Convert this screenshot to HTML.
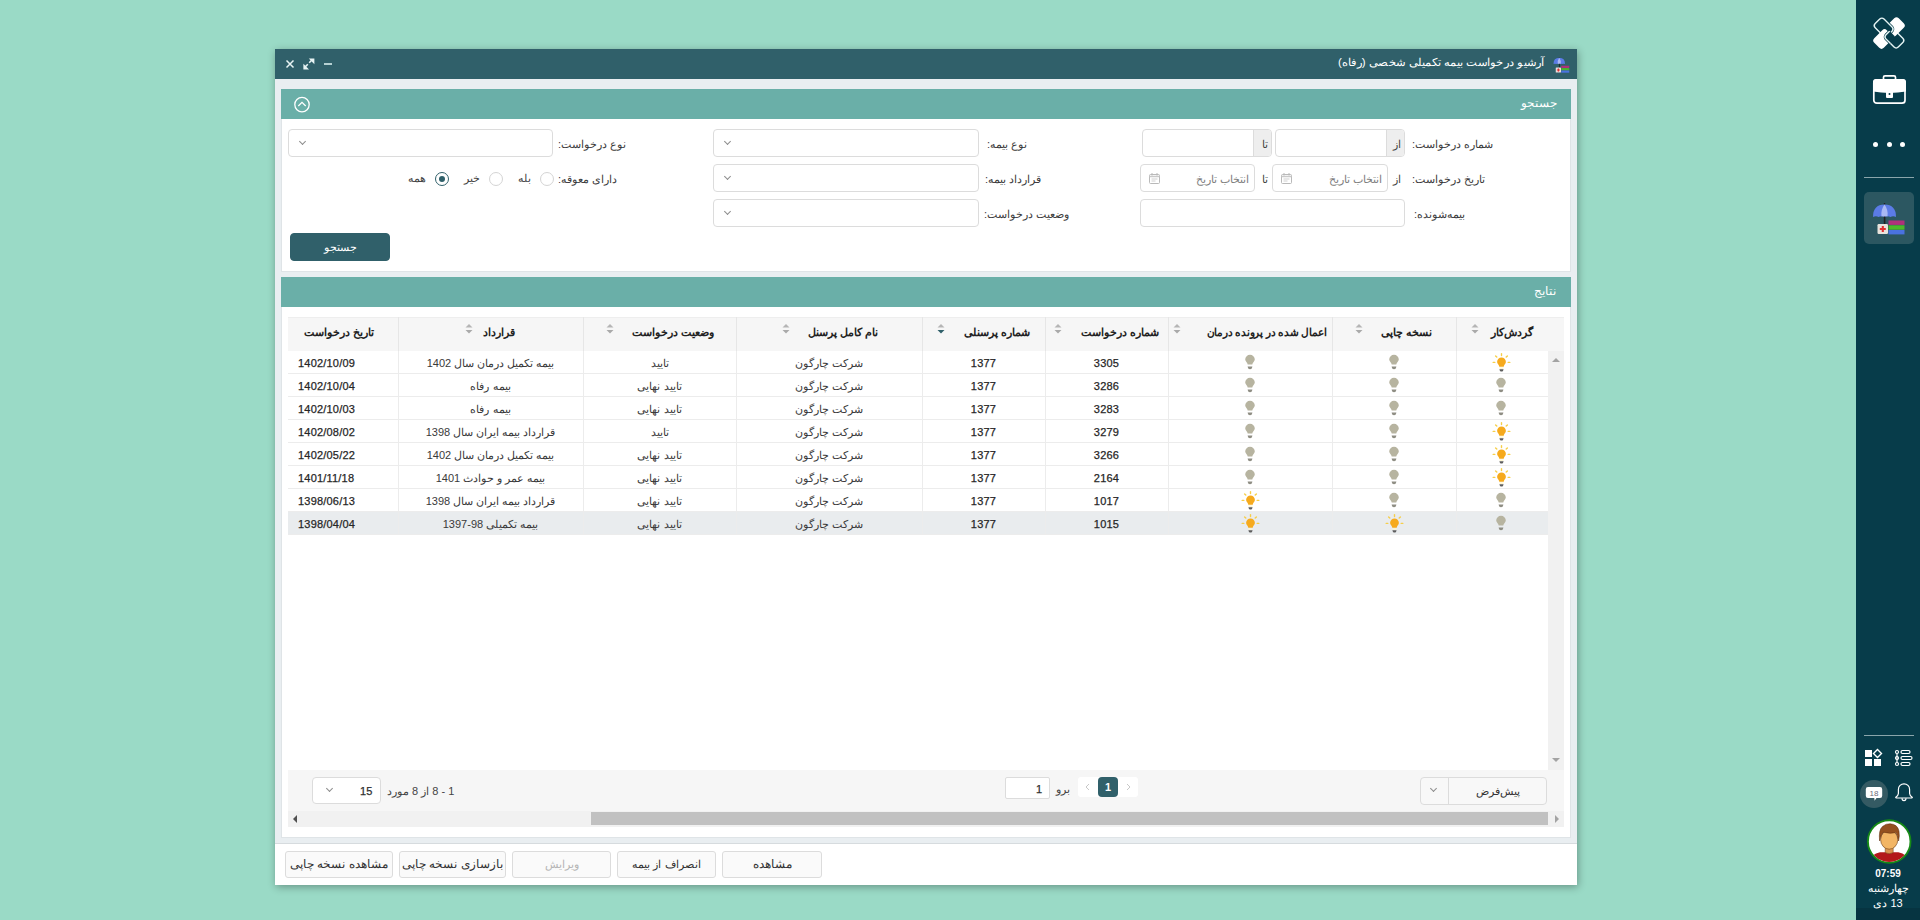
<!DOCTYPE html><html lang="fa"><head><meta charset="utf-8"><style>
*{box-sizing:border-box;margin:0;padding:0}
html,body{width:1920px;height:920px;overflow:hidden}
body{position:relative;background:#9adac6;font-family:"Liberation Sans",sans-serif;font-size:11px;color:#333}
.a{position:absolute}
.t{position:absolute;white-space:nowrap;direction:rtl;line-height:16px}
.inp{position:absolute;background:#fff;border:1px solid #dcdcdc;border-radius:4px}
.chev{position:absolute;width:5px;height:5px;border-right:1px solid #8c8c8c;border-bottom:1px solid #8c8c8c;transform:rotate(45deg)}
.btn{position:absolute;background:#fafafa;border:1px solid #dcdcdc;border-radius:3px;color:#333;text-align:center;line-height:25px;direction:rtl;white-space:nowrap}
.c{position:absolute;white-space:nowrap;direction:rtl;line-height:16px;color:#3a3a3a;font-size:11px}
.n{position:absolute;white-space:nowrap;line-height:16px;color:#262626;font-size:11px;-webkit-text-stroke:0.25px #262626;letter-spacing:0.2px}
.hd{position:absolute;white-space:nowrap;direction:rtl;font-weight:bold;color:#222;font-size:11px;line-height:16px}
</style></head><body>
<div class="a" style="left:1856px;top:0;width:64px;height:920px;background:#073c4a"></div>
<div class="a" style="left:275px;top:49px;width:1302px;height:836px;background:#e9eef1;box-shadow:1px 2px 8px rgba(0,0,0,.32)"></div>
<div class="a" style="left:275px;top:49px;width:1302px;height:30px;background:#30606a"></div>
<div class="t" style="right:375px;top:54px;color:#fff;transform:scaleX(1.045);transform-origin:100% 50%">آرشیو درخواست بیمه تکمیلی شخصی (رفاه)</div>
<svg class="a" style="left:1553px;top:56px" width="18" height="18" viewBox="0 0 36 36">
<path d="M12.5 2 V4" stroke="#222" stroke-width="1.4"/>
<path d="M1 16 Q1 3.5 12.5 3.5 Q24 3.5 24 16 Q21 14.5 18.5 16 Q15.5 14.5 12.5 16 Q9.5 14.5 6.5 16 Q4 14.5 1 16Z" fill="#5b7be6"/>
<path d="M12.5 3.5 Q8.5 9 9.5 15.6 Q11 14.8 12.5 16 Q14 14.8 15.5 15.6 Q16.5 9 12.5 3.5Z" fill="#a9b9f3"/>
<rect x="11.8" y="15.5" width="2" height="8" fill="#1b2b2b"/>
<rect x="5.5" y="23" width="10.5" height="10" rx="1.2" fill="#ecdcdc"/><path d="M10.8 25V31M7.8 28H13.8" stroke="#e03030" stroke-width="2.4"/>
<rect x="16.5" y="19.5" width="16" height="4.4" fill="#b0307a"/><rect x="16.5" y="24.3" width="16" height="4.4" fill="#4cb82a"/><rect x="16.5" y="29" width="16" height="4.4" fill="#4a72e0"/>
</svg>
<svg class="a" style="left:284px;top:57px" width="52" height="14" viewBox="0 0 52 14">
<path d="M2.5 3.5 L9.5 10.5 M9.5 3.5 L2.5 10.5" stroke="#e8f4f4" stroke-width="1.5"/>
<path d="M25.2 5.8 L28.2 2.8" stroke="#e8f4f4" stroke-width="1.6"/><path d="M24.8 1.6 H30.4 V7.2Z" fill="#e8f4f4"/>
<path d="M23.8 7.2 L20.8 10.2" stroke="#e8f4f4" stroke-width="1.6"/><path d="M19.4 6.8 V12.4 H25Z" fill="#e8f4f4"/>
<path d="M40 7 H48" stroke="#d8eeee" stroke-width="1.6"/>
</svg>
<div class="a" style="left:281px;top:89px;width:1290px;height:30px;background:#6aafa8"></div>
<div class="t" style="right:363px;top:95px;color:#fff;font-size:12px">جستجو</div>
<svg class="a" style="left:293px;top:96px" width="18" height="18" viewBox="0 0 18 18"><circle cx="9" cy="8.6" r="7.2" stroke="#fff" stroke-width="1.3" fill="none"/><path d="M5.3 10 L9 6.4 L12.7 10" stroke="#fff" stroke-width="1.3" fill="none"/></svg>
<div class="a" style="left:281px;top:119px;width:1290px;height:153px;background:#fff;border:1px solid #dfe4e7;border-top:0"></div>
<div class="t" style="right:427px;top:136.0px;color:#3c3c3c">شماره درخواست:</div>
<div class="t" style="right:435px;top:171.0px;color:#3c3c3c">تاریخ درخواست:</div>
<div class="t" style="right:455px;top:206.0px;color:#3c3c3c">بیمه‌شونده:</div>
<div class="inp" style="left:1275px;top:129px;width:130px;height:28px;overflow:hidden"><div class="a" style="right:0;top:0;width:18px;height:100%;background:#eeeeee;border-left:1px solid #dcdcdc"></div></div>
<div class="t" style="right:519px;top:136.0px;color:#444">از</div>
<div class="inp" style="left:1142px;top:129px;width:130px;height:28px;overflow:hidden"><div class="a" style="right:0;top:0;width:18px;height:100%;background:#eeeeee;border-left:1px solid #dcdcdc"></div></div>
<div class="t" style="right:652px;top:136.0px;color:#444">تا</div>
<div class="inp" style="left:1272px;top:164px;width:116px;height:28px"></div>
<div class="t" style="right:538px;top:170.5px;color:#808080">انتخاب تاریخ</div>
<svg class="a" style="left:1281px;top:172.0px" width="11" height="12" viewBox="0 0 11 12"><rect x="0.5" y="2.5" width="10" height="9" rx="1" fill="none" stroke="#b9b9b9" stroke-width="1"/><path d="M0.5 4.5H10.5" stroke="#c9c9c9" stroke-width="1.5"/><path d="M3 1V3.5M8 1V3.5" stroke="#b9b9b9" stroke-width="1"/><path d="M2.5 7H8.5M2.5 9H6.5" stroke="#cfcfcf" stroke-width="1"/></svg>
<div class="t" style="right:519px;top:171.0px;color:#444">از</div>
<div class="inp" style="left:1140px;top:164px;width:115px;height:28px"></div>
<div class="t" style="right:671px;top:170.5px;color:#808080">انتخاب تاریخ</div>
<svg class="a" style="left:1149px;top:172.0px" width="11" height="12" viewBox="0 0 11 12"><rect x="0.5" y="2.5" width="10" height="9" rx="1" fill="none" stroke="#b9b9b9" stroke-width="1"/><path d="M0.5 4.5H10.5" stroke="#c9c9c9" stroke-width="1.5"/><path d="M3 1V3.5M8 1V3.5" stroke="#b9b9b9" stroke-width="1"/><path d="M2.5 7H8.5M2.5 9H6.5" stroke="#cfcfcf" stroke-width="1"/></svg>
<div class="t" style="right:652px;top:171.0px;color:#444">تا</div>
<div class="inp" style="left:1140px;top:199px;width:265px;height:28px"></div>
<div class="t" style="right:893px;top:136.0px;color:#3c3c3c">نوع بیمه:</div>
<div class="t" style="right:879px;top:171.0px;color:#3c3c3c">قرارداد بیمه:</div>
<div class="t" style="right:851px;top:206.0px;color:#3c3c3c">وضعیت درخواست:</div>
<div class="inp" style="left:713px;top:129px;width:266px;height:28px"></div>
<div class="chev" style="left:725px;top:139.0px"></div>
<div class="inp" style="left:713px;top:164px;width:266px;height:28px"></div>
<div class="chev" style="left:725px;top:174.0px"></div>
<div class="inp" style="left:713px;top:199px;width:266px;height:28px"></div>
<div class="chev" style="left:725px;top:209.0px"></div>
<div class="t" style="right:1294px;top:136.0px;color:#3c3c3c">نوع درخواست:</div>
<div class="inp" style="left:288px;top:129px;width:265px;height:28px"></div>
<div class="chev" style="left:300px;top:139.0px"></div>
<div class="t" style="right:1303px;top:171.0px;color:#3c3c3c">دارای معوقه:</div>
<div class="a" style="left:540px;top:172.0px;width:14px;height:14px;border-radius:50%;border:1px solid #d4d4d4;background:#fff"></div>
<div class="t" style="right:1389px;top:170.0px;color:#444">بله</div>
<div class="a" style="left:489px;top:172.0px;width:14px;height:14px;border-radius:50%;border:1px solid #d4d4d4;background:#fff"></div>
<div class="t" style="right:1440px;top:170.0px;color:#444">خیر</div>
<div class="a" style="left:435px;top:172.0px;width:14px;height:14px;border-radius:50%;border:1.5px solid #30606a;background:#fff"><div class="a" style="left:2.5px;top:2.5px;width:6px;height:6px;border-radius:50%;background:#30606a"></div></div>
<div class="t" style="right:1494px;top:170.0px;color:#444">همه</div>
<div class="btn" style="left:290px;top:233px;width:100px;height:28px;background:#30606a;border-color:#30606a;color:#fff;border-radius:4px;line-height:26px">جستجو</div>
<div class="a" style="left:281px;top:277px;width:1290px;height:30px;background:#6aafa8"></div>
<div class="t" style="right:364px;top:283px;color:#fff;font-size:12px">نتایج</div>
<div class="a" style="left:281px;top:307px;width:1290px;height:531px;background:#fff;border:1px solid #dfe4e7;border-top:0"></div>
<div class="a" style="left:288px;top:317px;width:1276px;height:34px;background:#f6f6f6;border-top:1px solid #eeeeee"></div>
<div class="a" style="left:398px;top:317px;width:1px;height:34px;background:#e6e6e6"></div>
<div class="a" style="left:583px;top:317px;width:1px;height:34px;background:#e6e6e6"></div>
<div class="a" style="left:736px;top:317px;width:1px;height:34px;background:#e6e6e6"></div>
<div class="a" style="left:922px;top:317px;width:1px;height:34px;background:#e6e6e6"></div>
<div class="a" style="left:1045px;top:317px;width:1px;height:34px;background:#e6e6e6"></div>
<div class="a" style="left:1168px;top:317px;width:1px;height:34px;background:#e6e6e6"></div>
<div class="a" style="left:1332px;top:317px;width:1px;height:34px;background:#e6e6e6"></div>
<div class="a" style="left:1456px;top:317px;width:1px;height:34px;background:#e6e6e6"></div>
<div class="hd" style="right:1546px;top:324px;">تاریخ درخواست</div>
<div class="hd" style="right:1405px;top:324px;">قرارداد</div>
<svg class="a" style="left:465px;top:323px" width="8" height="12" viewBox="0 0 8 12"><path d="M0.5 4.5 L4 1 L7.5 4.5Z" fill="#b5b5b5"/><path d="M0.5 7 L4 10.5 L7.5 7Z" fill="#aaaaaa"/></svg>
<div class="hd" style="right:1206px;top:324px;">وضعیت درخواست</div>
<svg class="a" style="left:606px;top:323px" width="8" height="12" viewBox="0 0 8 12"><path d="M0.5 4.5 L4 1 L7.5 4.5Z" fill="#b5b5b5"/><path d="M0.5 7 L4 10.5 L7.5 7Z" fill="#aaaaaa"/></svg>
<div class="hd" style="right:1042px;top:324px;">نام کامل پرسنل</div>
<svg class="a" style="left:782px;top:323px" width="8" height="12" viewBox="0 0 8 12"><path d="M0.5 4.5 L4 1 L7.5 4.5Z" fill="#b5b5b5"/><path d="M0.5 7 L4 10.5 L7.5 7Z" fill="#aaaaaa"/></svg>
<div class="hd" style="right:890px;top:324px;">شماره پرسنلی</div>
<svg class="a" style="left:937px;top:323px" width="8" height="12" viewBox="0 0 8 12"><path d="M0.5 4.5 L4 1 L7.5 4.5Z" fill="#b5b5b5"/><path d="M0.5 7 L4 10.5 L7.5 7Z" fill="#30606a"/></svg>
<div class="hd" style="right:761px;top:324px;">شماره درخواست</div>
<svg class="a" style="left:1054px;top:323px" width="8" height="12" viewBox="0 0 8 12"><path d="M0.5 4.5 L4 1 L7.5 4.5Z" fill="#b5b5b5"/><path d="M0.5 7 L4 10.5 L7.5 7Z" fill="#aaaaaa"/></svg>
<div class="hd" style="right:593px;top:324px;transform:scaleX(0.955);transform-origin:100% 50%">اعمال شده در پرونده درمان</div>
<svg class="a" style="left:1173px;top:323px" width="8" height="12" viewBox="0 0 8 12"><path d="M0.5 4.5 L4 1 L7.5 4.5Z" fill="#b5b5b5"/><path d="M0.5 7 L4 10.5 L7.5 7Z" fill="#aaaaaa"/></svg>
<div class="hd" style="right:488px;top:324px;">نسخه چاپی</div>
<svg class="a" style="left:1355px;top:323px" width="8" height="12" viewBox="0 0 8 12"><path d="M0.5 4.5 L4 1 L7.5 4.5Z" fill="#b5b5b5"/><path d="M0.5 7 L4 10.5 L7.5 7Z" fill="#aaaaaa"/></svg>
<div class="hd" style="right:387px;top:324px;">گردش‌کار</div>
<svg class="a" style="left:1471px;top:323px" width="8" height="12" viewBox="0 0 8 12"><path d="M0.5 4.5 L4 1 L7.5 4.5Z" fill="#b5b5b5"/><path d="M0.5 7 L4 10.5 L7.5 7Z" fill="#aaaaaa"/></svg>
<div class="a" style="left:288px;top:351px;width:1260px;height:23px;background:#ffffff;border-bottom:1px solid #ececec"></div>
<div class="a" style="left:398px;top:351px;width:1px;height:23px;background:#ececec"></div>
<div class="a" style="left:583px;top:351px;width:1px;height:23px;background:#ececec"></div>
<div class="a" style="left:736px;top:351px;width:1px;height:23px;background:#ececec"></div>
<div class="a" style="left:922px;top:351px;width:1px;height:23px;background:#ececec"></div>
<div class="a" style="left:1045px;top:351px;width:1px;height:23px;background:#ececec"></div>
<div class="a" style="left:1168px;top:351px;width:1px;height:23px;background:#ececec"></div>
<div class="a" style="left:1332px;top:351px;width:1px;height:23px;background:#ececec"></div>
<div class="a" style="left:1456px;top:351px;width:1px;height:23px;background:#ececec"></div>
<div class="n" style="left:298px;top:355px">1402/10/09</div>
<div class="c" style="left:398px;width:185px;text-align:center;top:355px">بیمه تکمیل درمان سال 1402</div>
<div class="c" style="left:583px;width:153px;text-align:center;top:355px">تایید</div>
<div class="c" style="left:736px;width:186px;text-align:center;top:355px">شرکت چارگون</div>
<div class="n" style="left:922px;width:123px;text-align:center;top:355px">1377</div>
<div class="n" style="left:1045px;width:123px;text-align:center;top:355px">3305</div>
<svg class="a" style="left:1240px;top:351px" width="20" height="20" viewBox="0 0 20 20"><path d="M5.2 8.6A4.8 4.8 0 0 1 14.8 8.6C14.8 10.6 12.4 11.8 12.3 13.6H7.7C7.6 11.8 5.2 10.6 5.2 8.6Z" fill="#b7b4a0"/><path d="M7.6 15.4H12.4L11.8 17.4Q10 18.9 8.2 17.4Z" fill="#8f8e84"/></svg>
<svg class="a" style="left:1384px;top:351px" width="20" height="20" viewBox="0 0 20 20"><path d="M5.2 8.6A4.8 4.8 0 0 1 14.8 8.6C14.8 10.6 12.4 11.8 12.3 13.6H7.7C7.6 11.8 5.2 10.6 5.2 8.6Z" fill="#b7b4a0"/><path d="M7.6 15.4H12.4L11.8 17.4Q10 18.9 8.2 17.4Z" fill="#8f8e84"/></svg>
<svg class="a" style="left:1491px;top:351px" width="20" height="22" viewBox="0 0 20 22"><g stroke="#f6cf4a" stroke-width="1.4" stroke-linecap="round"><path d="M10.5 2.6V4.6M4.6 4.9L5.8 6.1M16.4 4.9L15.2 6.1M2.2 11.4H3.8M18.8 11.4H17.2"/></g><path d="M6.1 10.9A4.4 4.4 0 0 1 14.9 10.9C14.9 12.7 12.8 13.8 12.7 15.7H8.3C8.2 13.8 6.1 12.7 6.1 10.9Z" fill="#f6aa1c"/><path d="M8.3 16.6H12.7V17.2Q10.5 18.2 8.3 17.2Z" fill="#fff6c8"/><path d="M8.4 18.2H12.6L12 19.9Q10.5 21.2 9 19.9Z" fill="#5e5e5e"/></svg>
<div class="a" style="left:288px;top:374px;width:1260px;height:23px;background:#ffffff;border-bottom:1px solid #ececec"></div>
<div class="a" style="left:398px;top:374px;width:1px;height:23px;background:#ececec"></div>
<div class="a" style="left:583px;top:374px;width:1px;height:23px;background:#ececec"></div>
<div class="a" style="left:736px;top:374px;width:1px;height:23px;background:#ececec"></div>
<div class="a" style="left:922px;top:374px;width:1px;height:23px;background:#ececec"></div>
<div class="a" style="left:1045px;top:374px;width:1px;height:23px;background:#ececec"></div>
<div class="a" style="left:1168px;top:374px;width:1px;height:23px;background:#ececec"></div>
<div class="a" style="left:1332px;top:374px;width:1px;height:23px;background:#ececec"></div>
<div class="a" style="left:1456px;top:374px;width:1px;height:23px;background:#ececec"></div>
<div class="n" style="left:298px;top:378px">1402/10/04</div>
<div class="c" style="left:398px;width:185px;text-align:center;top:378px">بیمه رفاه</div>
<div class="c" style="left:583px;width:153px;text-align:center;top:378px">تایید نهایی</div>
<div class="c" style="left:736px;width:186px;text-align:center;top:378px">شرکت چارگون</div>
<div class="n" style="left:922px;width:123px;text-align:center;top:378px">1377</div>
<div class="n" style="left:1045px;width:123px;text-align:center;top:378px">3286</div>
<svg class="a" style="left:1240px;top:374px" width="20" height="20" viewBox="0 0 20 20"><path d="M5.2 8.6A4.8 4.8 0 0 1 14.8 8.6C14.8 10.6 12.4 11.8 12.3 13.6H7.7C7.6 11.8 5.2 10.6 5.2 8.6Z" fill="#b7b4a0"/><path d="M7.6 15.4H12.4L11.8 17.4Q10 18.9 8.2 17.4Z" fill="#8f8e84"/></svg>
<svg class="a" style="left:1384px;top:374px" width="20" height="20" viewBox="0 0 20 20"><path d="M5.2 8.6A4.8 4.8 0 0 1 14.8 8.6C14.8 10.6 12.4 11.8 12.3 13.6H7.7C7.6 11.8 5.2 10.6 5.2 8.6Z" fill="#b7b4a0"/><path d="M7.6 15.4H12.4L11.8 17.4Q10 18.9 8.2 17.4Z" fill="#8f8e84"/></svg>
<svg class="a" style="left:1491px;top:374px" width="20" height="20" viewBox="0 0 20 20"><path d="M5.2 8.6A4.8 4.8 0 0 1 14.8 8.6C14.8 10.6 12.4 11.8 12.3 13.6H7.7C7.6 11.8 5.2 10.6 5.2 8.6Z" fill="#b7b4a0"/><path d="M7.6 15.4H12.4L11.8 17.4Q10 18.9 8.2 17.4Z" fill="#8f8e84"/></svg>
<div class="a" style="left:288px;top:397px;width:1260px;height:23px;background:#ffffff;border-bottom:1px solid #ececec"></div>
<div class="a" style="left:398px;top:397px;width:1px;height:23px;background:#ececec"></div>
<div class="a" style="left:583px;top:397px;width:1px;height:23px;background:#ececec"></div>
<div class="a" style="left:736px;top:397px;width:1px;height:23px;background:#ececec"></div>
<div class="a" style="left:922px;top:397px;width:1px;height:23px;background:#ececec"></div>
<div class="a" style="left:1045px;top:397px;width:1px;height:23px;background:#ececec"></div>
<div class="a" style="left:1168px;top:397px;width:1px;height:23px;background:#ececec"></div>
<div class="a" style="left:1332px;top:397px;width:1px;height:23px;background:#ececec"></div>
<div class="a" style="left:1456px;top:397px;width:1px;height:23px;background:#ececec"></div>
<div class="n" style="left:298px;top:401px">1402/10/03</div>
<div class="c" style="left:398px;width:185px;text-align:center;top:401px">بیمه رفاه</div>
<div class="c" style="left:583px;width:153px;text-align:center;top:401px">تایید نهایی</div>
<div class="c" style="left:736px;width:186px;text-align:center;top:401px">شرکت چارگون</div>
<div class="n" style="left:922px;width:123px;text-align:center;top:401px">1377</div>
<div class="n" style="left:1045px;width:123px;text-align:center;top:401px">3283</div>
<svg class="a" style="left:1240px;top:397px" width="20" height="20" viewBox="0 0 20 20"><path d="M5.2 8.6A4.8 4.8 0 0 1 14.8 8.6C14.8 10.6 12.4 11.8 12.3 13.6H7.7C7.6 11.8 5.2 10.6 5.2 8.6Z" fill="#b7b4a0"/><path d="M7.6 15.4H12.4L11.8 17.4Q10 18.9 8.2 17.4Z" fill="#8f8e84"/></svg>
<svg class="a" style="left:1384px;top:397px" width="20" height="20" viewBox="0 0 20 20"><path d="M5.2 8.6A4.8 4.8 0 0 1 14.8 8.6C14.8 10.6 12.4 11.8 12.3 13.6H7.7C7.6 11.8 5.2 10.6 5.2 8.6Z" fill="#b7b4a0"/><path d="M7.6 15.4H12.4L11.8 17.4Q10 18.9 8.2 17.4Z" fill="#8f8e84"/></svg>
<svg class="a" style="left:1491px;top:397px" width="20" height="20" viewBox="0 0 20 20"><path d="M5.2 8.6A4.8 4.8 0 0 1 14.8 8.6C14.8 10.6 12.4 11.8 12.3 13.6H7.7C7.6 11.8 5.2 10.6 5.2 8.6Z" fill="#b7b4a0"/><path d="M7.6 15.4H12.4L11.8 17.4Q10 18.9 8.2 17.4Z" fill="#8f8e84"/></svg>
<div class="a" style="left:288px;top:420px;width:1260px;height:23px;background:#ffffff;border-bottom:1px solid #ececec"></div>
<div class="a" style="left:398px;top:420px;width:1px;height:23px;background:#ececec"></div>
<div class="a" style="left:583px;top:420px;width:1px;height:23px;background:#ececec"></div>
<div class="a" style="left:736px;top:420px;width:1px;height:23px;background:#ececec"></div>
<div class="a" style="left:922px;top:420px;width:1px;height:23px;background:#ececec"></div>
<div class="a" style="left:1045px;top:420px;width:1px;height:23px;background:#ececec"></div>
<div class="a" style="left:1168px;top:420px;width:1px;height:23px;background:#ececec"></div>
<div class="a" style="left:1332px;top:420px;width:1px;height:23px;background:#ececec"></div>
<div class="a" style="left:1456px;top:420px;width:1px;height:23px;background:#ececec"></div>
<div class="n" style="left:298px;top:424px">1402/08/02</div>
<div class="c" style="left:398px;width:185px;text-align:center;top:424px">قرارداد بیمه ایران سال 1398</div>
<div class="c" style="left:583px;width:153px;text-align:center;top:424px">تایید</div>
<div class="c" style="left:736px;width:186px;text-align:center;top:424px">شرکت چارگون</div>
<div class="n" style="left:922px;width:123px;text-align:center;top:424px">1377</div>
<div class="n" style="left:1045px;width:123px;text-align:center;top:424px">3279</div>
<svg class="a" style="left:1240px;top:420px" width="20" height="20" viewBox="0 0 20 20"><path d="M5.2 8.6A4.8 4.8 0 0 1 14.8 8.6C14.8 10.6 12.4 11.8 12.3 13.6H7.7C7.6 11.8 5.2 10.6 5.2 8.6Z" fill="#b7b4a0"/><path d="M7.6 15.4H12.4L11.8 17.4Q10 18.9 8.2 17.4Z" fill="#8f8e84"/></svg>
<svg class="a" style="left:1384px;top:420px" width="20" height="20" viewBox="0 0 20 20"><path d="M5.2 8.6A4.8 4.8 0 0 1 14.8 8.6C14.8 10.6 12.4 11.8 12.3 13.6H7.7C7.6 11.8 5.2 10.6 5.2 8.6Z" fill="#b7b4a0"/><path d="M7.6 15.4H12.4L11.8 17.4Q10 18.9 8.2 17.4Z" fill="#8f8e84"/></svg>
<svg class="a" style="left:1491px;top:420px" width="20" height="22" viewBox="0 0 20 22"><g stroke="#f6cf4a" stroke-width="1.4" stroke-linecap="round"><path d="M10.5 2.6V4.6M4.6 4.9L5.8 6.1M16.4 4.9L15.2 6.1M2.2 11.4H3.8M18.8 11.4H17.2"/></g><path d="M6.1 10.9A4.4 4.4 0 0 1 14.9 10.9C14.9 12.7 12.8 13.8 12.7 15.7H8.3C8.2 13.8 6.1 12.7 6.1 10.9Z" fill="#f6aa1c"/><path d="M8.3 16.6H12.7V17.2Q10.5 18.2 8.3 17.2Z" fill="#fff6c8"/><path d="M8.4 18.2H12.6L12 19.9Q10.5 21.2 9 19.9Z" fill="#5e5e5e"/></svg>
<div class="a" style="left:288px;top:443px;width:1260px;height:23px;background:#ffffff;border-bottom:1px solid #ececec"></div>
<div class="a" style="left:398px;top:443px;width:1px;height:23px;background:#ececec"></div>
<div class="a" style="left:583px;top:443px;width:1px;height:23px;background:#ececec"></div>
<div class="a" style="left:736px;top:443px;width:1px;height:23px;background:#ececec"></div>
<div class="a" style="left:922px;top:443px;width:1px;height:23px;background:#ececec"></div>
<div class="a" style="left:1045px;top:443px;width:1px;height:23px;background:#ececec"></div>
<div class="a" style="left:1168px;top:443px;width:1px;height:23px;background:#ececec"></div>
<div class="a" style="left:1332px;top:443px;width:1px;height:23px;background:#ececec"></div>
<div class="a" style="left:1456px;top:443px;width:1px;height:23px;background:#ececec"></div>
<div class="n" style="left:298px;top:447px">1402/05/22</div>
<div class="c" style="left:398px;width:185px;text-align:center;top:447px">بیمه تکمیل درمان سال 1402</div>
<div class="c" style="left:583px;width:153px;text-align:center;top:447px">تایید نهایی</div>
<div class="c" style="left:736px;width:186px;text-align:center;top:447px">شرکت چارگون</div>
<div class="n" style="left:922px;width:123px;text-align:center;top:447px">1377</div>
<div class="n" style="left:1045px;width:123px;text-align:center;top:447px">3266</div>
<svg class="a" style="left:1240px;top:443px" width="20" height="20" viewBox="0 0 20 20"><path d="M5.2 8.6A4.8 4.8 0 0 1 14.8 8.6C14.8 10.6 12.4 11.8 12.3 13.6H7.7C7.6 11.8 5.2 10.6 5.2 8.6Z" fill="#b7b4a0"/><path d="M7.6 15.4H12.4L11.8 17.4Q10 18.9 8.2 17.4Z" fill="#8f8e84"/></svg>
<svg class="a" style="left:1384px;top:443px" width="20" height="20" viewBox="0 0 20 20"><path d="M5.2 8.6A4.8 4.8 0 0 1 14.8 8.6C14.8 10.6 12.4 11.8 12.3 13.6H7.7C7.6 11.8 5.2 10.6 5.2 8.6Z" fill="#b7b4a0"/><path d="M7.6 15.4H12.4L11.8 17.4Q10 18.9 8.2 17.4Z" fill="#8f8e84"/></svg>
<svg class="a" style="left:1491px;top:443px" width="20" height="22" viewBox="0 0 20 22"><g stroke="#f6cf4a" stroke-width="1.4" stroke-linecap="round"><path d="M10.5 2.6V4.6M4.6 4.9L5.8 6.1M16.4 4.9L15.2 6.1M2.2 11.4H3.8M18.8 11.4H17.2"/></g><path d="M6.1 10.9A4.4 4.4 0 0 1 14.9 10.9C14.9 12.7 12.8 13.8 12.7 15.7H8.3C8.2 13.8 6.1 12.7 6.1 10.9Z" fill="#f6aa1c"/><path d="M8.3 16.6H12.7V17.2Q10.5 18.2 8.3 17.2Z" fill="#fff6c8"/><path d="M8.4 18.2H12.6L12 19.9Q10.5 21.2 9 19.9Z" fill="#5e5e5e"/></svg>
<div class="a" style="left:288px;top:466px;width:1260px;height:23px;background:#ffffff;border-bottom:1px solid #ececec"></div>
<div class="a" style="left:398px;top:466px;width:1px;height:23px;background:#ececec"></div>
<div class="a" style="left:583px;top:466px;width:1px;height:23px;background:#ececec"></div>
<div class="a" style="left:736px;top:466px;width:1px;height:23px;background:#ececec"></div>
<div class="a" style="left:922px;top:466px;width:1px;height:23px;background:#ececec"></div>
<div class="a" style="left:1045px;top:466px;width:1px;height:23px;background:#ececec"></div>
<div class="a" style="left:1168px;top:466px;width:1px;height:23px;background:#ececec"></div>
<div class="a" style="left:1332px;top:466px;width:1px;height:23px;background:#ececec"></div>
<div class="a" style="left:1456px;top:466px;width:1px;height:23px;background:#ececec"></div>
<div class="n" style="left:298px;top:470px">1401/11/18</div>
<div class="c" style="left:398px;width:185px;text-align:center;top:470px">بیمه عمر و حوادث 1401</div>
<div class="c" style="left:583px;width:153px;text-align:center;top:470px">تایید نهایی</div>
<div class="c" style="left:736px;width:186px;text-align:center;top:470px">شرکت چارگون</div>
<div class="n" style="left:922px;width:123px;text-align:center;top:470px">1377</div>
<div class="n" style="left:1045px;width:123px;text-align:center;top:470px">2164</div>
<svg class="a" style="left:1240px;top:466px" width="20" height="20" viewBox="0 0 20 20"><path d="M5.2 8.6A4.8 4.8 0 0 1 14.8 8.6C14.8 10.6 12.4 11.8 12.3 13.6H7.7C7.6 11.8 5.2 10.6 5.2 8.6Z" fill="#b7b4a0"/><path d="M7.6 15.4H12.4L11.8 17.4Q10 18.9 8.2 17.4Z" fill="#8f8e84"/></svg>
<svg class="a" style="left:1384px;top:466px" width="20" height="20" viewBox="0 0 20 20"><path d="M5.2 8.6A4.8 4.8 0 0 1 14.8 8.6C14.8 10.6 12.4 11.8 12.3 13.6H7.7C7.6 11.8 5.2 10.6 5.2 8.6Z" fill="#b7b4a0"/><path d="M7.6 15.4H12.4L11.8 17.4Q10 18.9 8.2 17.4Z" fill="#8f8e84"/></svg>
<svg class="a" style="left:1491px;top:466px" width="20" height="22" viewBox="0 0 20 22"><g stroke="#f6cf4a" stroke-width="1.4" stroke-linecap="round"><path d="M10.5 2.6V4.6M4.6 4.9L5.8 6.1M16.4 4.9L15.2 6.1M2.2 11.4H3.8M18.8 11.4H17.2"/></g><path d="M6.1 10.9A4.4 4.4 0 0 1 14.9 10.9C14.9 12.7 12.8 13.8 12.7 15.7H8.3C8.2 13.8 6.1 12.7 6.1 10.9Z" fill="#f6aa1c"/><path d="M8.3 16.6H12.7V17.2Q10.5 18.2 8.3 17.2Z" fill="#fff6c8"/><path d="M8.4 18.2H12.6L12 19.9Q10.5 21.2 9 19.9Z" fill="#5e5e5e"/></svg>
<div class="a" style="left:288px;top:489px;width:1260px;height:23px;background:#ffffff;border-bottom:1px solid #ececec"></div>
<div class="a" style="left:398px;top:489px;width:1px;height:23px;background:#ececec"></div>
<div class="a" style="left:583px;top:489px;width:1px;height:23px;background:#ececec"></div>
<div class="a" style="left:736px;top:489px;width:1px;height:23px;background:#ececec"></div>
<div class="a" style="left:922px;top:489px;width:1px;height:23px;background:#ececec"></div>
<div class="a" style="left:1045px;top:489px;width:1px;height:23px;background:#ececec"></div>
<div class="a" style="left:1168px;top:489px;width:1px;height:23px;background:#ececec"></div>
<div class="a" style="left:1332px;top:489px;width:1px;height:23px;background:#ececec"></div>
<div class="a" style="left:1456px;top:489px;width:1px;height:23px;background:#ececec"></div>
<div class="n" style="left:298px;top:493px">1398/06/13</div>
<div class="c" style="left:398px;width:185px;text-align:center;top:493px">قرارداد بیمه ایران سال 1398</div>
<div class="c" style="left:583px;width:153px;text-align:center;top:493px">تایید نهایی</div>
<div class="c" style="left:736px;width:186px;text-align:center;top:493px">شرکت چارگون</div>
<div class="n" style="left:922px;width:123px;text-align:center;top:493px">1377</div>
<div class="n" style="left:1045px;width:123px;text-align:center;top:493px">1017</div>
<svg class="a" style="left:1240px;top:489px" width="20" height="22" viewBox="0 0 20 22"><g stroke="#f6cf4a" stroke-width="1.4" stroke-linecap="round"><path d="M10.5 2.6V4.6M4.6 4.9L5.8 6.1M16.4 4.9L15.2 6.1M2.2 11.4H3.8M18.8 11.4H17.2"/></g><path d="M6.1 10.9A4.4 4.4 0 0 1 14.9 10.9C14.9 12.7 12.8 13.8 12.7 15.7H8.3C8.2 13.8 6.1 12.7 6.1 10.9Z" fill="#f6aa1c"/><path d="M8.3 16.6H12.7V17.2Q10.5 18.2 8.3 17.2Z" fill="#fff6c8"/><path d="M8.4 18.2H12.6L12 19.9Q10.5 21.2 9 19.9Z" fill="#5e5e5e"/></svg>
<svg class="a" style="left:1384px;top:489px" width="20" height="20" viewBox="0 0 20 20"><path d="M5.2 8.6A4.8 4.8 0 0 1 14.8 8.6C14.8 10.6 12.4 11.8 12.3 13.6H7.7C7.6 11.8 5.2 10.6 5.2 8.6Z" fill="#b7b4a0"/><path d="M7.6 15.4H12.4L11.8 17.4Q10 18.9 8.2 17.4Z" fill="#8f8e84"/></svg>
<svg class="a" style="left:1491px;top:489px" width="20" height="20" viewBox="0 0 20 20"><path d="M5.2 8.6A4.8 4.8 0 0 1 14.8 8.6C14.8 10.6 12.4 11.8 12.3 13.6H7.7C7.6 11.8 5.2 10.6 5.2 8.6Z" fill="#b7b4a0"/><path d="M7.6 15.4H12.4L11.8 17.4Q10 18.9 8.2 17.4Z" fill="#8f8e84"/></svg>
<div class="a" style="left:288px;top:512px;width:1260px;height:23px;background:#e9ecee;border-bottom:1px solid #ececec"></div>
<div class="a" style="left:398px;top:512px;width:1px;height:23px;background:#ececec"></div>
<div class="a" style="left:583px;top:512px;width:1px;height:23px;background:#ececec"></div>
<div class="a" style="left:736px;top:512px;width:1px;height:23px;background:#ececec"></div>
<div class="a" style="left:922px;top:512px;width:1px;height:23px;background:#ececec"></div>
<div class="a" style="left:1045px;top:512px;width:1px;height:23px;background:#ececec"></div>
<div class="a" style="left:1168px;top:512px;width:1px;height:23px;background:#ececec"></div>
<div class="a" style="left:1332px;top:512px;width:1px;height:23px;background:#ececec"></div>
<div class="a" style="left:1456px;top:512px;width:1px;height:23px;background:#ececec"></div>
<div class="n" style="left:298px;top:516px">1398/04/04</div>
<div class="c" style="left:398px;width:185px;text-align:center;top:516px">بیمه تکمیلی 98-1397</div>
<div class="c" style="left:583px;width:153px;text-align:center;top:516px">تایید نهایی</div>
<div class="c" style="left:736px;width:186px;text-align:center;top:516px">شرکت چارگون</div>
<div class="n" style="left:922px;width:123px;text-align:center;top:516px">1377</div>
<div class="n" style="left:1045px;width:123px;text-align:center;top:516px">1015</div>
<svg class="a" style="left:1240px;top:512px" width="20" height="22" viewBox="0 0 20 22"><g stroke="#f6cf4a" stroke-width="1.4" stroke-linecap="round"><path d="M10.5 2.6V4.6M4.6 4.9L5.8 6.1M16.4 4.9L15.2 6.1M2.2 11.4H3.8M18.8 11.4H17.2"/></g><path d="M6.1 10.9A4.4 4.4 0 0 1 14.9 10.9C14.9 12.7 12.8 13.8 12.7 15.7H8.3C8.2 13.8 6.1 12.7 6.1 10.9Z" fill="#f6aa1c"/><path d="M8.3 16.6H12.7V17.2Q10.5 18.2 8.3 17.2Z" fill="#fff6c8"/><path d="M8.4 18.2H12.6L12 19.9Q10.5 21.2 9 19.9Z" fill="#5e5e5e"/></svg>
<svg class="a" style="left:1384px;top:512px" width="20" height="22" viewBox="0 0 20 22"><g stroke="#f6cf4a" stroke-width="1.4" stroke-linecap="round"><path d="M10.5 2.6V4.6M4.6 4.9L5.8 6.1M16.4 4.9L15.2 6.1M2.2 11.4H3.8M18.8 11.4H17.2"/></g><path d="M6.1 10.9A4.4 4.4 0 0 1 14.9 10.9C14.9 12.7 12.8 13.8 12.7 15.7H8.3C8.2 13.8 6.1 12.7 6.1 10.9Z" fill="#f6aa1c"/><path d="M8.3 16.6H12.7V17.2Q10.5 18.2 8.3 17.2Z" fill="#fff6c8"/><path d="M8.4 18.2H12.6L12 19.9Q10.5 21.2 9 19.9Z" fill="#5e5e5e"/></svg>
<svg class="a" style="left:1491px;top:512px" width="20" height="20" viewBox="0 0 20 20"><path d="M5.2 8.6A4.8 4.8 0 0 1 14.8 8.6C14.8 10.6 12.4 11.8 12.3 13.6H7.7C7.6 11.8 5.2 10.6 5.2 8.6Z" fill="#b7b4a0"/><path d="M7.6 15.4H12.4L11.8 17.4Q10 18.9 8.2 17.4Z" fill="#8f8e84"/></svg>
<div class="a" style="left:1548px;top:351px;width:16px;height:419px;background:#f1f1f1"></div>
<svg class="a" style="left:1551px;top:356px" width="10" height="8" viewBox="0 0 10 8"><path d="M1 6 L5 2 L9 6Z" fill="#a3a3a3"/></svg>
<svg class="a" style="left:1551px;top:756px" width="10" height="8" viewBox="0 0 10 8"><path d="M1 2 L5 6 L9 2Z" fill="#a3a3a3"/></svg>
<div class="a" style="left:288px;top:770px;width:1276px;height:41px;background:#f6f6f6"></div>
<div class="inp" style="left:1420px;top:777px;width:127px;height:28px;background:#f8f8f8"><div class="a" style="left:27px;top:0;width:1px;height:26px;background:#dcdcdc"></div></div>
<div class="chev" style="left:1431px;top:786px"></div>
<div class="t" style="right:400px;top:783px;color:#333">پیش‌فرض</div>
<div class="a" style="left:1078px;top:777px;width:60px;height:20px;background:#fff;border-radius:3px"></div>
<div class="a" style="left:1098px;top:777px;width:20px;height:20px;background:#30606a;border-radius:4px;color:#fff;font-weight:bold;text-align:center;line-height:20px;font-size:11px">1</div>
<svg class="a" style="left:1083px;top:782px" width="10" height="10" viewBox="0 0 10 10"><path d="M6 2 L3 5 L6 8" stroke="#c8c8c8" stroke-width="1" fill="none"/></svg>
<svg class="a" style="left:1123px;top:782px" width="10" height="10" viewBox="0 0 10 10"><path d="M4 2 L7 5 L4 8" stroke="#c8c8c8" stroke-width="1" fill="none"/></svg>
<div class="t" style="right:850px;top:781px;color:#444">برو</div>
<div class="inp" style="left:1005px;top:777px;width:45px;height:22px;border-radius:2px"></div>
<div class="n" style="left:1036px;top:781px;color:#333">1</div>
<div class="t" style="left:387px;top:783px;color:#444;direction:rtl">1 - 8 از 8 مورد</div>
<div class="inp" style="left:312px;top:777px;width:69px;height:27px"></div>
<div class="chev" style="left:327px;top:786px"></div>
<div class="n" style="left:360px;top:783px;color:#333">15</div>
<div class="a" style="left:288px;top:811px;width:1276px;height:16px;background:#f1f1f1"></div>
<div class="a" style="left:591px;top:812px;width:957px;height:13px;background:#c1c1c1"></div>
<svg class="a" style="left:291px;top:814px" width="8" height="10" viewBox="0 0 8 10"><path d="M6 1 L2 5 L6 9Z" fill="#505050"/></svg>
<svg class="a" style="left:1553px;top:814px" width="8" height="10" viewBox="0 0 8 10"><path d="M2 1 L6 5 L2 9Z" fill="#a3a3a3"/></svg>
<div class="a" style="left:275px;top:843px;width:1302px;height:42px;background:#fff;border-top:1px solid #d6dbde"></div>
<div class="btn" style="left:285px;top:851px;width:108px;height:27px;color:#333;font-size:12px">مشاهده نسخه چاپی</div>
<div class="btn" style="left:399px;top:851px;width:107px;height:27px;color:#333;font-size:12px">بازسازی نسخه چاپی</div>
<div class="btn" style="left:512px;top:851px;width:99px;height:27px;color:#b5b5b5;font-size:11px">ویرایش</div>
<div class="btn" style="left:617px;top:851px;width:99px;height:27px;color:#333;font-size:11px">انصراف از بیمه</div>
<div class="btn" style="left:722px;top:851px;width:100px;height:27px;color:#333;font-size:12px">مشاهده</div>
<svg class="a" style="left:1869px;top:13px" width="40" height="40" viewBox="0 0 40 40">
<defs><clipPath id="lgC"><rect x="-9.6" y="-7.6" width="19.2" height="15.2" rx="3" transform="translate(14.43 25.59) rotate(-45)"/></clipPath></defs>
<g transform="translate(20 20) scale(1.07) translate(-20 -20)">
<g transform="translate(25.05 25.30) rotate(45)"><rect x="-8.1" y="-5.8" width="16.2" height="11.6" rx="2.8" fill="#073c4a" stroke="#073c4a" stroke-width="2.6"/><rect x="-8.1" y="-5.8" width="16.2" height="11.6" rx="2.8" fill="none" stroke="#e6f4f4" stroke-width="1.3"/></g>
<g transform="translate(25.59 14.43) rotate(-45)"><rect x="-8.3" y="-6.3" width="16.6" height="12.6" rx="3" fill="#fff"/></g>
<g transform="translate(14.97 14.72) rotate(45)"><rect x="-8.1" y="-5.8" width="16.2" height="11.6" rx="2.8" fill="#073c4a" stroke="#073c4a" stroke-width="2.6"/><rect x="-8.1" y="-5.8" width="16.2" height="11.6" rx="2.8" fill="none" stroke="#e6f4f4" stroke-width="1.3"/></g>
<g transform="translate(14.43 25.59) rotate(-45)"><rect x="-8.3" y="-6.3" width="16.6" height="12.6" rx="3" fill="#fff"/></g>
<g clip-path="url(#lgC)"><g transform="translate(25.05 25.30) rotate(45)"><rect x="-8.1" y="-5.8" width="16.2" height="11.6" rx="2.8" fill="#073c4a" stroke="#073c4a" stroke-width="2.6"/><rect x="-8.1" y="-5.8" width="16.2" height="11.6" rx="2.8" fill="none" stroke="#e6f4f4" stroke-width="1.3"/></g></g>
</g></svg>
<svg class="a" style="left:1870px;top:72px" width="38" height="34" viewBox="0 0 38 34">
<rect x="13.5" y="3.8" width="12" height="5" rx="1.5" fill="none" stroke="#fff" stroke-width="1.7"/>
<rect x="3.8" y="7.8" width="31.2" height="23.4" rx="3" fill="none" stroke="#fff" stroke-width="1.7"/>
<path d="M3 10 Q3 7 6 7 H33 Q36 7 36 10 V19.5 Q28 20.8 19.5 21 Q11 20.8 3 19.5Z" fill="#fff"/>
<rect x="16" y="19" width="7" height="7" rx="1" fill="#fff"/><circle cx="19.5" cy="22" r="1" fill="#073c4a"/>
</svg>
<div class="a" style="left:1873.0px;top:142px;width:5px;height:5px;border-radius:50%;background:#fff"></div>
<div class="a" style="left:1887.0px;top:142px;width:5px;height:5px;border-radius:50%;background:#fff"></div>
<div class="a" style="left:1900.0px;top:142px;width:5px;height:5px;border-radius:50%;background:#fff"></div>
<div class="a" style="left:1864px;top:177px;width:50px;height:1px;background:#8aa5ab"></div>
<div class="a" style="left:1864px;top:192px;width:50px;height:52px;background:#2c5761;border-radius:5px"></div>
<svg class="a" style="left:1872px;top:201px" width="36" height="36" viewBox="0 0 36 36">
<path d="M12.5 2 V4" stroke="#222" stroke-width="1.4"/>
<path d="M1 16 Q1 3.5 12.5 3.5 Q24 3.5 24 16 Q21 14.5 18.5 16 Q15.5 14.5 12.5 16 Q9.5 14.5 6.5 16 Q4 14.5 1 16Z" fill="#5b7be6"/>
<path d="M12.5 3.5 Q8.5 9 9.5 15.6 Q11 14.8 12.5 16 Q14 14.8 15.5 15.6 Q16.5 9 12.5 3.5Z" fill="#a9b9f3"/>
<rect x="11.8" y="15.5" width="1.6" height="8" fill="#222"/>
<rect x="5.5" y="23" width="10.5" height="10" rx="1.2" fill="#e8e3dc"/><path d="M10.8 25V31M7.8 28H13.8" stroke="#e03030" stroke-width="2.1"/>
<rect x="16.5" y="19.5" width="16" height="4.4" fill="#b0307a"/><rect x="16.5" y="24.3" width="16" height="4.4" fill="#4cb82a"/><rect x="16.5" y="29" width="16" height="4.4" fill="#4a72e0"/>
</svg>
<div class="a" style="left:1864px;top:735px;width:50px;height:1px;background:#8aa5ab"></div>
<svg class="a" style="left:1864px;top:748px" width="20" height="20" viewBox="0 0 20 20">
<rect x="1" y="2" width="7" height="7" fill="#fff"/><rect x="1" y="11" width="7" height="7" fill="#fff"/><rect x="10" y="11" width="7" height="7" fill="#fff"/>
<path d="M13.5 1.5 L17.5 5.5 L13.5 9.5 L9.5 5.5Z" fill="none" stroke="#fff" stroke-width="1.4"/></svg>
<svg class="a" style="left:1894px;top:748px" width="20" height="20" viewBox="0 0 20 20" fill="none" stroke="#fff" stroke-width="1.2">
<circle cx="3" cy="4" r="1.5"/><circle cx="3" cy="10" r="1.5"/><circle cx="3" cy="16" r="1.5"/><path d="M3 5.5V14.5"/>
<rect x="7" y="2.5" width="9" height="3" rx="1.5"/><rect x="7" y="8.5" width="11" height="3" rx="1.5"/><rect x="7" y="14.5" width="9" height="3" rx="1.5"/></svg>
<div class="a" style="left:1860px;top:780px;width:28px;height:28px;border-radius:50%;background:#345a63"></div>
<svg class="a" style="left:1865px;top:786px" width="18" height="17" viewBox="0 0 18 17"><path d="M3 1H15a2.2 2.2 0 0 1 2.2 2.2V9.8A2.2 2.2 0 0 1 15 12H11.5L9.6 14.8L9.3 12H3A2.2 2.2 0 0 1 0.8 9.8V3.2A2.2 2.2 0 0 1 3 1Z" fill="#fff"/><text x="9" y="9.6" font-size="8" text-anchor="middle" fill="#6a6a7a" font-family="Liberation Sans">18</text></svg>
<svg class="a" style="left:1894px;top:782px" width="20" height="21" viewBox="0 0 20 21" fill="none" stroke="#fff" stroke-width="1.2"><path d="M10 1.8a5.6 5.6 0 0 0-5.6 5.6V11.5Q4.2 13.8 1.8 15.2Q1.4 16 2.3 16H17.7Q18.6 16 18.2 15.2Q15.8 13.8 15.6 11.5V7.4A5.6 5.6 0 0 0 10 1.8Z"/><path d="M8 16.2Q8 18.6 10 18.6Q12 18.6 12 16.2"/></svg>
<svg class="a" style="left:1866px;top:818px" width="46" height="46" viewBox="0 0 46 46">
<circle cx="23.2" cy="23.5" r="21.3" fill="#fff" stroke="#168a16" stroke-width="1.9"/>
<clipPath id="av"><circle cx="23.2" cy="23.5" r="20.4"/></clipPath>
<g clip-path="url(#av)">
<path d="M3 46 Q4 36 14 34.2 H32.4 Q42.4 36 43.4 46Z" fill="#b3181a"/>
<path d="M19.2 28.5H27.2V34.6Q23.2 37 19.2 34.6Z" fill="#d99350" stroke="#6b3a12" stroke-width=".5"/>
<ellipse cx="23.2" cy="21.6" rx="8.6" ry="9.6" fill="#f2b565" stroke="#6b3a12" stroke-width=".6"/>
<path d="M13.6 23 Q12.4 12 16.5 8.4 Q20 5.4 24.5 5.8 Q31.5 6.4 33 13 Q33.8 18 32.6 23 Q31.6 16.5 29.5 14.6 Q24.5 16.2 17.5 14.2 Q14.8 16.6 13.6 23Z" fill="#94501f" stroke="#5a2a0a" stroke-width=".5"/>
</g></svg>
<div class="a" style="left:1856px;top:866.5px;width:64px;text-align:center;color:#fff;font-weight:bold;font-size:10px;line-height:14px">07:59</div>
<div class="t" style="left:1856px;top:881px;width:64px;text-align:center;color:#fff;font-size:11px;line-height:14px">چهارشنبه</div>
<div class="t" style="left:1856px;top:896px;width:64px;text-align:center;color:#fff;font-size:11px;line-height:14px">13 دی</div>
<div class="a" style="left:1856px;top:908px;width:64px;height:12px;background:rgba(0,0,0,.12)"></div>
</body></html>
